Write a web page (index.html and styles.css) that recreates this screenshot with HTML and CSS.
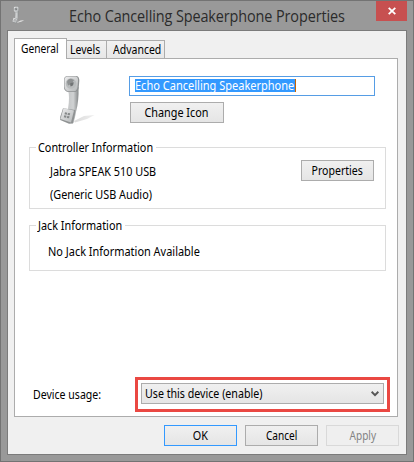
FILE: index.html
```html
<!DOCTYPE html>
<html lang="en">
<head>
<meta charset="utf-8">
<title>Echo Cancelling Speakerphone Properties</title>
<link rel="stylesheet" href="styles.css">
</head>
<body>
<div class="window">
  <header class="titlebar">
    <svg class="app-icon" viewBox="8 4 37 52"><use href="#handset"/></svg>
    <h1 class="title"><span class="text">Echo Cancelling Speakerphone Properties</span></h1>
    <button class="close" aria-label="Close"><svg width="8" height="8" viewBox="0 0 8 8"><path d="M.7.8l6.6 6.4M7.3.8L.7 7.2" stroke="#fff" stroke-width="1.8"/></svg></button>
  </header>
  <main class="client">
    <nav class="tabs">
      <span class="tab active"><span class="text t-general">General</span></span>
      <span class="tab levels"><span class="text t-levels">Levels</span></span>
      <span class="tab advanced"><span class="text t-advanced">Advanced</span></span>
    </nav>
    <section class="pane">
      <div class="identity">
        <svg class="phone" width="45" height="60" viewBox="0 0 45 60">
          <defs>
            <linearGradient id="body" x1="0" x2="1"><stop offset="0" stop-color="#c4c6c7"/><stop offset=".5" stop-color="#d0d2d3"/><stop offset="1" stop-color="#858889"/></linearGradient>
            <linearGradient id="cap" x1="0" y1="0" x2="1" y2="1"><stop offset="0" stop-color="#ededee"/><stop offset="1" stop-color="#b4b7b8"/></linearGradient>
            <linearGradient id="shade" x1="0" x2="1"><stop offset="0" stop-color="#dcdcdc"/><stop offset="1" stop-color="#eee"/></linearGradient>
          </defs>
          <g id="handset">
            <path d="M24 51L34 46L44.500 45L37 49L25 52.500Z" fill="url(#shade)"/>
            <path d="M18 20Q20 27 18 39L19 52L23.500 53Q25 48 26 42Q29 31 28.500 17Z" fill="url(#body)"/>
            <path d="M17 6H27Q29.500 7 29.300 11L28.700 18Q28 21.500 25 22H18Q14.500 21 14 18V10Q14 6.500 17 6Z" fill="#8f9293"/>
            <path d="M17 6.500H26Q28.300 7 28 11L27.500 17Q27 21 24 21.300H18Q15 20.500 14.500 17V10Q14.500 7 17 6.500Z" fill="url(#cap)"/>
            <circle cx="21" cy="13.500" r="5.300" fill="#b9bcbd"/>
            <path d="M17 12Q17.500 9 21 8.700L24 10L21.500 14L18 15.500Z" fill="#8e9192"/>
            <path d="M20 13.500L23.500 12Q24 16 20.500 16.500Z" fill="#717475"/>
            <path d="M13 38.300L25.300 40L25 44L23 53.500L19 53.800L10.200 50V47Z" fill="#8f9293"/>
            <path d="M13.500 38.300L24 40.500L21 52.500L10.500 49Z" fill="url(#cap)"/>
            <path d="M15 42.300l2.200.4-.5 2-2.200-.4zM18 42.900l2.200.4-.5 2-2.200-.4zM14.300 45.300l2.200.4-.5 2-2.200-.4zM17.300 45.900l2.200.4-.5 2-2.200-.4z" fill="#858889"/>
          </g>
        </svg>
        <div class="naming">
          <div class="field"><div class="selected"><span class="text t-selected">Echo Cancelling Speakerphone</span></div></div>
          <button class="btn change"><span class="text mid">Change Icon</span></button>
        </div>
      </div>
      <fieldset class="group controller">
        <legend><span class="text">Controller Information</span></legend>
        <div class="details"><p><span class="text">Jabra SPEAK 510 USB</span></p><p><span class="text">(Generic USB Audio)</span></p></div>
        <button class="btn props"><span class="text mid t-props">Properties</span></button>
      </fieldset>
      <fieldset class="group jack">
        <legend><span class="text">Jack Information</span></legend>
        <p><span class="text t-nojack">No Jack Information Available</span></p>
      </fieldset>
      <div class="usage">
        <label><span class="text t-usage">Device usage:</span></label>
        <div class="highlight"><div class="select"><span class="text t-select">Use this device (enable)</span><svg width="8" height="6" viewBox="0 0 8 6"><path d="M.6.8L4 4.200 7.400.8" fill="none" stroke="#555" stroke-width="2"/></svg></div></div>
      </div>
    </section>
    <footer class="actions">
      <button class="btn ok"><span class="text mid">OK</span></button>
      <button class="btn"><span class="text mid t-cancel">Cancel</span></button>
      <button class="btn disabled" disabled><span class="text mid t-cancel">Apply</span></button>
    </footer>
  </main>
</div>
</body>
</html>
```
FILE: styles.css
```css
* { box-sizing: border-box; }
body { margin: 0; font: 12px/16px "Noto Sans", "Open Sans", sans-serif; color: #000; }
p, h1, fieldset, legend { margin: 0; padding: 0; }
.text { display: inline-block; white-space: nowrap; transform: scaleX(.903); transform-origin: 0 50%; }
.mid { transform-origin: 50% 50%; }
.t-general { transform: scaleX(.85); }
.t-levels, .t-advanced { transform: scaleX(.875); }
.t-props, .t-usage { transform: scaleX(.88); }
.t-selected { transform: scaleX(.918); }
.t-nojack { transform: scaleX(.912); }
.t-select { transform: scaleX(.888); }
.t-cancel { transform: scaleX(.84); }
.window { width: 414px; height: 462px; background: #999; border: 1px solid #737373; padding: 0 6px; }
.titlebar { height: 29px; display: flex; align-items: flex-start; }
.app-icon { width: 14px; height: 18px; margin: 5px 0 0 4px; }
.title { margin: 3px 0 0 44px; width: 275px; font-size: 16px; line-height: 24px; font-weight: 400; color: #2b2b2b; white-space: nowrap; font-family: "Open Sans", sans-serif; letter-spacing: -.1px; }
.title .text { transform: scaleX(.9); }
.close { margin: 0 0 0 auto; width: 31px; height: 20px; padding: 0; border: 0; background: #c75050; display: flex; align-items: center; justify-content: center; }
.client { width: 400px; height: 425px; border: 1px solid #7b7b7b; background: #f0f0f0; padding: 7px 7px 0 6px; }
.tabs { display: flex; align-items: flex-end; height: 20px; }
.tab { height: 18px; border: 1px solid #acacac; border-left: 0; border-bottom: 0; background: linear-gradient(#f1f1f1, #e7e7e7); padding: 1px 0 0 3px; }
.tab.active { position: relative; width: 53px; height: 21px; margin-bottom: -1px; border-left: 1px solid #acacac; background: #fff; padding: 2px 0 0 6px; }
.levels { width: 40px; }
.advanced { width: 58px; padding-left: 6px; }
.pane { width: 384px; height: 359px; border: 1px solid #acacac; background: #fff; padding: 17px 11px 0 14px; }
.identity { display: flex; height: 71px; }
.phone { margin: -6px 0 0 21px; flex: none; }
.naming { margin-left: 34px; }
.field { width: 246px; height: 20px; border: 1px solid #569de5; padding: 2px 0 0 5px; }
.selected { width: 161px; height: 13px; line-height: 14px; background: #39f; color: #fff; border-right: 1px solid #c86400; }
.btn { width: 73px; height: 21px; padding: 0; border: 1px solid #acacac; background: linear-gradient(#f0f0f0, #e5e5e5); font: inherit; color: #000; display: flex; align-items: center; justify-content: center; }
.change { width: 94px; margin: 6px 0 0 1px; padding-right: 1px; }
.group { width: 357px; border: 1px solid #dcdcdc; min-width: 0; }
legend { margin-left: 6px; padding: 1px 0 0 2px; height: 16px; width: 120px; }
.controller { height: 70px; margin-top: -8px; display: flex; justify-content: space-between; }
.controller p { height: 23px; padding-left: 20px; }
.details { margin-top: 9px; }
.props { margin: 5px 11px 0 0; }
.jack { height: 54px; margin-top: 8px; }
.jack legend { width: 89px; }
.jack p { padding: 11px 0 0 18px; }
.usage { display: flex; align-items: center; height: 35px; margin-top: 106px; padding-left: 4px; }
.usage label { width: 102px; flex: none; }
.highlight { width: 255px; height: 35px; border: 3px solid #ea4842; padding: 3px; flex: none; }
.select { width: 243px; height: 21px; border: 1px solid #acacac; background: linear-gradient(#f0f0f0, #e5e5e5); display: flex; align-items: center; justify-content: space-between; padding: 0 4px 0 3px; }
.actions { display: flex; justify-content: flex-end; gap: 8px; margin-top: 8px; }
.ok { border-color: #39f; }
.disabled { color: #838383; border-color: #d9d9d9; background: #efefef; }
```
